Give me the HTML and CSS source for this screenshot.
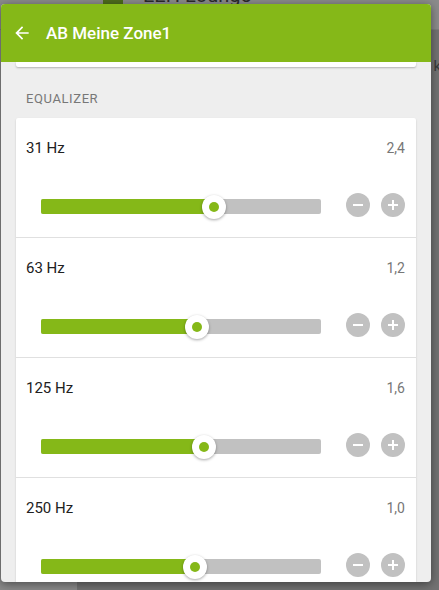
FILE: index.html
```html
<!DOCTYPE html>
<html lang="de">
<head>
<meta charset="utf-8">
<title>AB Meine Zone1</title>
<link rel="stylesheet" href="styles.css">
</head>
<body>
<div class="page">
  <header class="bg-top">
    <span class="bg-logo"></span>
    <span class="bg-title">EEH Lounge</span>
  </header>
  <div class="bg-main">
    <aside class="bg-side"></aside>
    <div class="bg-content"><span class="bg-k">k</span></div>
  </div>
</div>

<div class="dialog">
  <div class="dlg-header">
    <svg class="back" viewBox="0 0 24 24" width="20" height="20"><path fill="#fff" d="M20 11H7.83l5.59-5.59L12 4l-8 8 8 8 1.41-1.41L7.83 13H20v-2z"/></svg>
    <h1 class="dlg-title">AB Meine Zone1</h1>
  </div>
  <div class="dlg-body">
    <div class="prev-card"></div>
    <div class="section-label">Equalizer</div>
    <div class="card">
      <div class="row">
        <div class="row-head"><span class="band">31 Hz</span><span class="val">2,4</span></div>
        <div class="controls">
          <div class="track"><div class="fill" style="width:61.8%"></div><div class="thumb" style="left:61.8%"></div></div>
          <div class="btns"><span class="rbtn minus"></span><span class="rbtn plus"></span></div>
        </div>
      </div>
      <div class="row">
        <div class="row-head"><span class="band">63 Hz</span><span class="val">1,2</span></div>
        <div class="controls">
          <div class="track"><div class="fill" style="width:55.7%"></div><div class="thumb" style="left:55.7%"></div></div>
          <div class="btns"><span class="rbtn minus"></span><span class="rbtn plus"></span></div>
        </div>
      </div>
      <div class="row">
        <div class="row-head"><span class="band">125 Hz</span><span class="val">1,6</span></div>
        <div class="controls">
          <div class="track"><div class="fill" style="width:58.2%"></div><div class="thumb" style="left:58.2%"></div></div>
          <div class="btns"><span class="rbtn minus"></span><span class="rbtn plus"></span></div>
        </div>
      </div>
      <div class="row">
        <div class="row-head"><span class="band">250 Hz</span><span class="val">1,0</span></div>
        <div class="controls">
          <div class="track"><div class="fill" style="width:55%"></div><div class="thumb" style="left:55%"></div></div>
          <div class="btns"><span class="rbtn minus"></span><span class="rbtn plus"></span></div>
        </div>
      </div>
    </div>
  </div>
</div>
</body>
</html>
```

FILE: styles.css
```css
* { box-sizing: border-box; }
html, body { margin: 0; padding: 0; }
body {
  width: 439px;
  height: 590px;
  overflow: hidden;
  position: relative;
  font-family: Roboto, "Noto Sans", sans-serif;
  background: #727272;
}

/* background page (dimmed behind the dialog) */
.page { display: flex; flex-direction: column; height: 590px; }
.bg-top {
  height: 30px;
  background: #8b8b8b;
  border-bottom: 1px solid #7e7e7e;
  display: flex;
  align-items: flex-start;
  padding-left: 103px;
  gap: 20px;
}
.bg-logo {
  width: 20px; height: 20px;
  background: #4d6b1d;
  margin-top: -14px;
}
.bg-title {
  font-size: 20px;
  line-height: 20px;
  color: #2a2a2a;
  margin-top: -15px;
}
.bg-main { flex: 1; display: flex; }
.bg-side { width: 77px; background: #8a8a8a; }
.bg-content { flex: 1; background: #727272; display: flex; justify-content: flex-end; padding-top: 26px; }
.bg-k { font-size: 15px; color: #3a3a3a; line-height: 20px; height: 20px; margin-right: -2px; }

/* dialog */
.dialog {
  position: absolute;
  top: 4px;
  left: 1px;
  width: 430px;
  height: 578px;
  border-radius: 4px;
  overflow: hidden;
  background: #eeeeee;
  box-shadow: 0 2px 10px rgba(0,0,0,0.45);
  display: flex;
  flex-direction: column;
}
.dlg-header {
  height: 58px;
  flex: none;
  background: #85b818;
  display: flex;
  align-items: center;
  padding-left: 11px;
  gap: 14px;
}
.back { display: block; }
.dlg-title {
  margin: 0;
  font-size: 17px;
  font-weight: 500;
  color: #ffffff;
  line-height: 20px;
}
.dlg-body {
  flex: 1;
  overflow: hidden;
  padding: 0 15px;
}
.prev-card {
  height: 5px;
  background: #fff;
  border-radius: 0 0 2px 2px;
  box-shadow: 0 1px 2px rgba(0,0,0,0.25);
}
.section-label {
  margin-top: 24px;
  margin-bottom: 11px;
  padding-left: 10px;
  font-size: 13px;
  line-height: 16px;
  text-transform: uppercase;
  letter-spacing: 0.6px;
  color: #777777;
}
.card {
  background: #fff;
  border-radius: 2px;
  box-shadow: 0 1px 2px rgba(0,0,0,0.18);
}
.row {
  padding: 20px 11px 19px 10px;
  border-bottom: 1px solid #e0e0e0;
}
.row-head {
  display: flex;
  justify-content: space-between;
  align-items: baseline;
  line-height: 20px;
}
.band { font-size: 15px; color: #212121; }
.val { font-size: 14px; color: #777777; }
.controls {
  margin-top: 36px;
  height: 24px;
  display: flex;
  align-items: center;
}
.track {
  position: relative;
  width: 280px;
  height: 15px;
  margin-left: 15px;
  margin-top: 1px;
  border-radius: 2px;
  background: #c1c1c1;
}
.fill {
  height: 100%;
  background: #85b818;
  border-radius: 2px 0 0 2px;
}
.thumb {
  position: absolute;
  top: 50%;
  width: 24px;
  height: 24px;
  margin: -12px 0 0 -12px;
  border-radius: 50%;
  background: #fff;
  box-shadow: 0 1px 3px rgba(0,0,0,0.35);
  display: flex;
  align-items: center;
  justify-content: center;
}
.thumb::after {
  content: "";
  width: 10px;
  height: 10px;
  border-radius: 50%;
  background: #85b818;
}
.btns {
  margin-left: auto;
  margin-top: -3px;
  display: flex;
  gap: 11px;
}
.rbtn {
  position: relative;
  width: 24px;
  height: 24px;
  border-radius: 50%;
  background: #c1c1c1;
}
.rbtn::before, .plus::after {
  content: "";
  position: absolute;
  left: 7px;
  top: 11px;
  width: 10px;
  height: 2px;
  background: #fff;
}
.plus::after {
  left: 11px;
  top: 7px;
  width: 2px;
  height: 10px;
}
```
